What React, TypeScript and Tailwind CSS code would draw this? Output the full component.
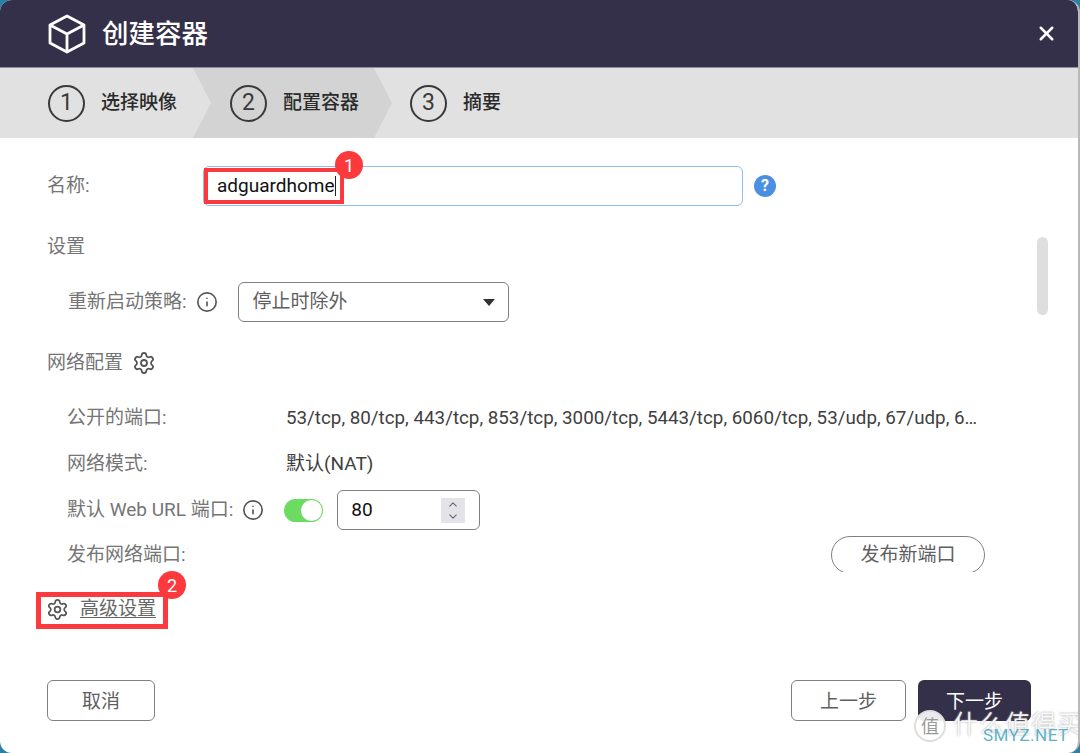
import { ChevronDown, ChevronUp, Info, Settings, X } from 'lucide-react';

const FONT = "font-['Roboto','Noto_Sans_CJK_SC',sans-serif]";

function Step({ num, label }: { num: number; label: string }) {
    return (
        <div className="flex items-center">
            <div className="w-[37px] h-[37px] rounded-full border-2 border-[#3a3a3a] flex items-center justify-center text-[23px] text-[#3a3a3a]">
                {num}
            </div>
            <span className="ml-[16px] pt-[1px] text-[19px] font-medium text-[#2b2b2b]">{label}</span>
        </div>
    );
}

function Badge({ num, className }: { num: number; className: string }) {
    return (
        <div className={`absolute w-[28px] h-[28px] rounded-full bg-[#fc3a3d] text-white text-[18px] flex items-center justify-center ${className}`}>
            {num}
        </div>
    );
}

export default function App() {
    return (
        <div className={`w-[1080px] h-[753px] overflow-hidden bg-[#2b80a8] ${FONT}`}>
            <div className="relative w-full h-full rounded-[12px] overflow-hidden bg-white flex flex-col border-r-2 border-[#b9b9b9]">

                {/* Header */}
                <div className="h-[68px] shrink-0 bg-[#353049] border-b border-[#8f8d99] flex items-center pl-[48px] pr-[20px]">
                    <svg width="38" height="40" viewBox="0 0 38 40" fill="none" stroke="white" strokeWidth="2.8" strokeLinejoin="round">
                        <path d="M19 2 L36 11 V29 L19 38 L2 29 V11 Z" />
                        <path d="M2 11 L19 20 L36 11 M19 20 V38" />
                    </svg>
                    <span className="ml-[16px] text-[26.5px] font-medium text-white">创建容器</span>
                    <X className="ml-auto text-white" size={23} strokeWidth={2.6} />
                </div>

                {/* Stepper */}
                <div className="h-[70px] shrink-0 bg-[#e1e1e1] flex items-center">
                    <div className="w-[193px] pl-[48px] shrink-0">
                        <Step num={1} label="选择映像" />
                    </div>
                    <div className="w-[199px] h-full shrink-0 pl-[37px] flex items-center bg-[#d3d3d3] [clip-path:polygon(0_0,181px_0,199px_50%,181px_100%,0_100%,18px_50%)]">
                        <Step num={2} label="配置容器" />
                    </div>
                    <div className="pl-[18px]">
                        <Step num={3} label="摘要" />
                    </div>
                </div>

                {/* Name */}
                <div className="flex items-center h-[40px] mt-[28px] pl-[47px] shrink-0">
                    <span className="w-[156px] text-[19px] text-[#757575]">名称:</span>
                    <div className="w-[540px] h-[40px] rounded-[6px] border border-[#8fbdee] flex items-center pl-[13px] text-[19px] text-[#111]">
                        adguardhome
                        <span className="w-px h-[20px] bg-[#222]" />
                    </div>
                    <div className="ml-[11px] w-[22px] h-[22px] rounded-full bg-[#4a8fe2] text-white text-[16px] font-bold flex items-center justify-center">?</div>
                </div>

                {/* Scrolling form */}
                <div className="h-[347px] mt-[19px] shrink-0 overflow-hidden pl-[47px] pr-[95px] text-[19px] text-[#757575]">
                    <div className="h-[44px] flex items-center">设置</div>
                    <div className="flex items-center h-[40px] mt-[13px] ml-[21px]">
                        <span>重新启动策略:</span>
                        <Info className="ml-[9px] text-[#555]" size={22} strokeWidth={1.8} />
                        <div className="ml-[20px] w-[271px] h-[40px] rounded-[6px] border border-[#808080] flex items-center pl-[14px] pr-[13px] text-[#5f5f5f]">
                            停止时除外
                            <span className="ml-auto w-0 h-0 border-x-[6px] border-x-transparent border-t-[7px] border-t-[#333]" />
                        </div>
                    </div>
                    <div className="flex items-center h-[40px] mt-[21px]">
                        <span>网络配置</span>
                        <Settings className="ml-[9px] text-[#555]" size={24} strokeWidth={1.8} />
                    </div>
                    <div className="ml-[20px] mt-[15px]">
                        <div className="flex items-center h-[40px]">
                            <span className="w-[219px] shrink-0">公开的端口:</span>
                            <span className="w-[697px] truncate text-[18.8px] text-[#404040]">53/tcp, 80/tcp, 443/tcp, 853/tcp, 3000/tcp, 5443/tcp, 6060/tcp, 53/udp, 67/udp, 68/udp, 80/udp</span>
                        </div>
                        <div className="flex items-center h-[40px] mt-[6px]">
                            <span className="w-[219px] shrink-0">网络模式:</span>
                            <span className="text-[#404040]">默认(NAT)</span>
                        </div>
                        <div className="flex items-center h-[40px] mt-[6px]">
                            <span>默认 Web URL 端口:</span>
                            <Info className="ml-[9px] text-[#555]" size={22} strokeWidth={1.8} />
                            <div className="ml-[20px] w-[39px] h-[23px] rounded-full bg-[#6bdb62] flex items-center justify-end pr-[1px]">
                                <span className="w-[21px] h-[21px] rounded-full bg-white" />
                            </div>
                            <div className="ml-[14px] w-[143px] h-[40px] rounded-[6px] border border-[#808080] flex items-center pl-[13px] pr-[14px] text-[19px] text-[#111]">
                                80
                                <div className="ml-auto w-[24px] h-[25px] bg-[#e4e3ea] flex flex-col items-center justify-center text-[#666]">
                                    <ChevronUp size={14} strokeWidth={2} className="-mb-[1px]" />
                                    <ChevronDown size={14} strokeWidth={2} />
                                </div>
                            </div>
                        </div>
                        <div className="flex items-start justify-between w-[918px] mt-[6px]">
                            <span className="leading-[38px]">发布网络端口:</span>
                            <div className="w-[154px] h-[38px] rounded-full border border-[#808080] flex items-center justify-center text-[#5f5f5f]">发布新端口</div>
                        </div>
                    </div>
                </div>

                {/* Advanced settings */}
                <div className="flex items-center h-[36px] mt-[19px] pl-[46px] text-[19px] text-[#666] shrink-0">
                    <Settings size={23} strokeWidth={1.8} className="text-[#555]" />
                    <span className="ml-[11px] underline underline-offset-2">高级设置</span>
                </div>

                {/* Footer */}
                <div className="flex items-center mt-[53px] pl-[47px] pr-[47px] text-[19px] shrink-0">
                    <div className="w-[108px] h-[41px] pt-[3px] rounded-[6px] border border-[#808080] flex items-center justify-center text-[#5f5f5f]">取消</div>
                    <div className="ml-auto w-[115px] h-[41px] pt-[3px] rounded-[6px] border border-[#808080] flex items-center justify-center text-[#5f5f5f]">上一步</div>
                    <div className="ml-[12px] w-[113px] h-[41px] pt-[3px] rounded-[6px] bg-[#353049] flex items-center justify-center text-white">下一步</div>
                </div>

                {/* Annotations */}
                <div className="absolute left-[204px] top-[168px] w-[140px] h-[36px] border-[4px] border-[#fc3a3d]" />
                <Badge num={1} className="left-[335px] top-[151px]" />
                <div className="absolute left-[36px] top-[592px] w-[132px] h-[37px] border-[5px] border-[#fc3a3d]" />
                <Badge num={2} className="left-[158px] top-[571px]" />

                {/* Scrollbar */}
                <div className="absolute left-[1037px] top-[237px] w-[11px] h-[78px] rounded-full bg-[#dedede]" />

                {/* Watermark */}
                <div className="absolute left-[914px] top-[710px] w-[32px] h-[32px] rounded-full border-2 border-[#ddd] bg-white/90 flex items-center justify-center text-[18px] text-[#999]">值</div>
                <span className="absolute left-[953px] top-[708px] text-[25px] leading-[34px] tracking-[1px] text-white/90 [text-shadow:0_0_2px_#999] whitespace-nowrap">什么值得买</span>
                <span className="absolute left-[983px] top-[723px] text-[17px] leading-[24px] tracking-[0.5px] text-[#5fb2c6] whitespace-nowrap">SMYZ.NET</span>
            </div>
        </div>
    );
}
